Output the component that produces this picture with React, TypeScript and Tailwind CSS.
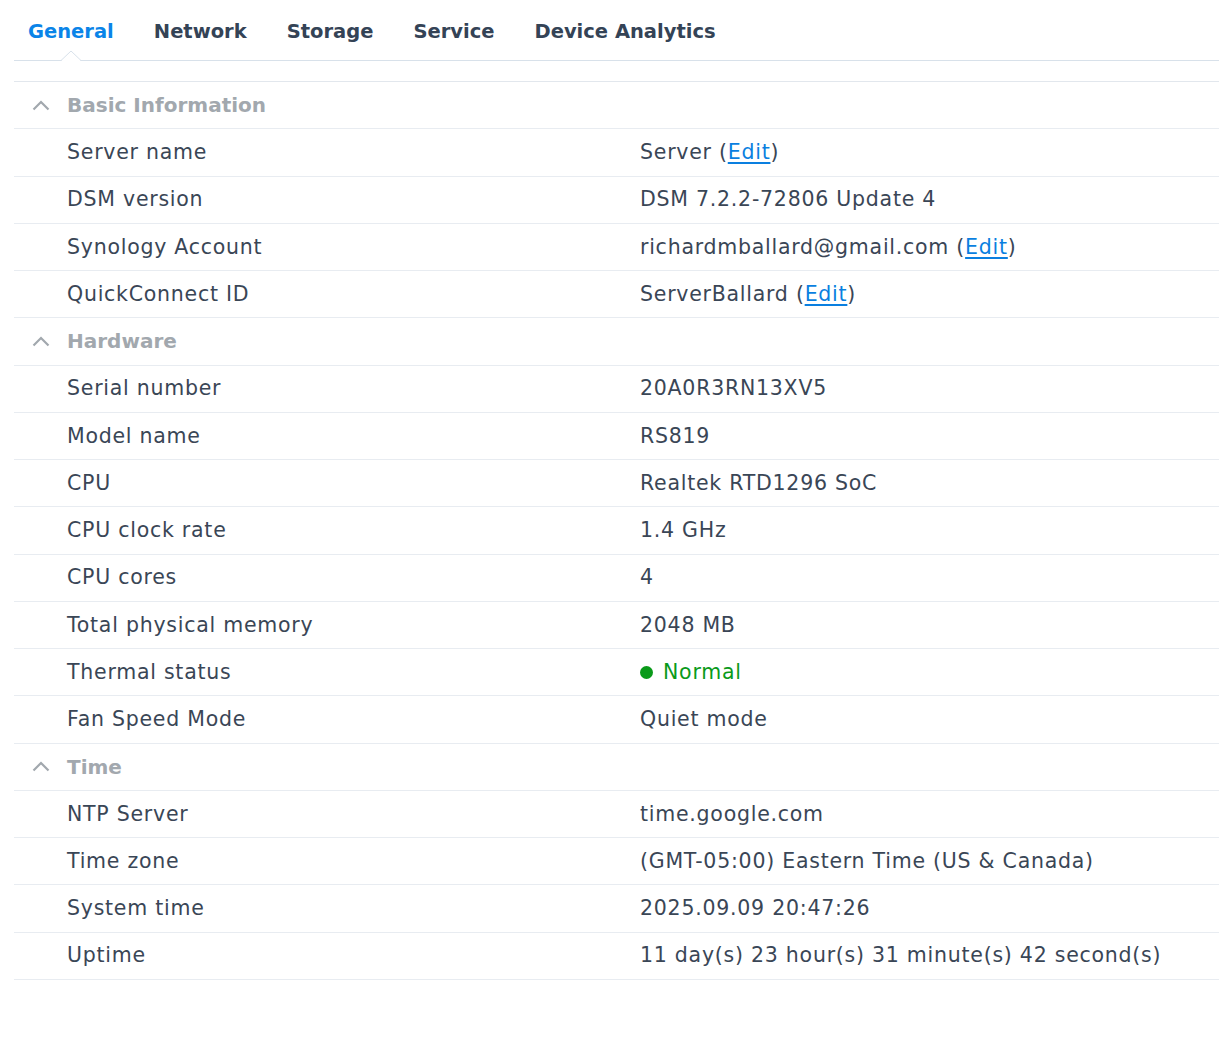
import React from "react";

type Row = { label: string; value: React.ReactNode };

const Edit = () => (
  <a href="#" className="text-[#0a7fe0] underline underline-offset-[3px]">
    Edit
  </a>
);

const sections: { title: string; rows: Row[] }[] = [
  {
    title: "Basic Information",
    rows: [
      { label: "Server name", value: <>Server (<Edit />)</> },
      { label: "DSM version", value: "DSM 7.2.2-72806 Update 4" },
      { label: "Synology Account", value: <>richardmballard@gmail.com (<Edit />)</> },
      { label: "QuickConnect ID", value: <>ServerBallard (<Edit />)</> },
    ],
  },
  {
    title: "Hardware",
    rows: [
      { label: "Serial number", value: "20A0R3RN13XV5" },
      { label: "Model name", value: "RS819" },
      { label: "CPU", value: "Realtek RTD1296 SoC" },
      { label: "CPU clock rate", value: "1.4 GHz" },
      { label: "CPU cores", value: "4" },
      { label: "Total physical memory", value: "2048 MB" },
      {
        label: "Thermal status",
        value: (
          <span className="flex items-center text-[#0a9a1a]">
            <span className="mr-[10px] inline-block h-[13px] w-[13px] rounded-full bg-[#0a9a1a]" />
            Normal
          </span>
        ),
      },
      { label: "Fan Speed Mode", value: "Quiet mode" },
    ],
  },
  {
    title: "Time",
    rows: [
      { label: "NTP Server", value: "time.google.com" },
      { label: "Time zone", value: "(GMT-05:00) Eastern Time (US & Canada)" },
      { label: "System time", value: "2025.09.09 20:47:26" },
      { label: "Uptime", value: "11 day(s) 23 hour(s) 31 minute(s) 42 second(s)" },
    ],
  },
];

const tabs = ["General", "Network", "Storage", "Service", "Device Analytics"];

export default function App() {
  return (
    <div
      className="min-h-[1047px] w-[1219px] bg-white pl-[14px] text-[#3a4656]"
      style={{ fontFamily: '"DejaVu Sans", Verdana, sans-serif' }}
    >
      <div className="relative flex h-[61px] items-center gap-[40px] border-b border-[#d8e1ea] pl-[14px] pt-[4px] text-[19.5px] font-bold">
        {tabs.map((t, i) => (
          <div key={t} className={i === 0 ? "text-[#0a84e8]" : "text-[#344356]"}>
            {t}
          </div>
        ))}
        <svg
          className="absolute bottom-[-1px] left-[47px]"
          width="20"
          height="11"
          viewBox="0 0 20 11"
        >
          <path d="M0 10.5 L10 1 L20 10.5" fill="white" stroke="#d8e1ea" strokeWidth="1" />
          <rect x="1" y="10" width="18" height="1" fill="white" />
        </svg>
      </div>
      <div className="mt-[20px] border-t border-[#e2e7ed]">
        {sections.map((s) => (
          <div key={s.title}>
            <div className="flex h-[47.25px] items-center border-b border-[#e8ecf1] text-[#a2a8ae]">
              <svg className="ml-[18px] mr-[17px]" width="18" height="11" viewBox="0 0 18 11">
                <path d="M1.5 9.5 L9 2 L16.5 9.5" fill="none" stroke="#a2a8ae" strokeWidth="2.2" />
              </svg>
              <span className="text-[20px] font-bold">{s.title}</span>
            </div>
            {s.rows.map((r) => (
              <div
                key={r.label}
                className="flex h-[47.25px] items-center border-b border-[#e8ecf1] text-[20.5px] tracking-[0.75px]"
              >
                <div className="w-[626px] pl-[53px]">{r.label}</div>
                <div>{r.value}</div>
              </div>
            ))}
          </div>
        ))}
      </div>
    </div>
  );
}
